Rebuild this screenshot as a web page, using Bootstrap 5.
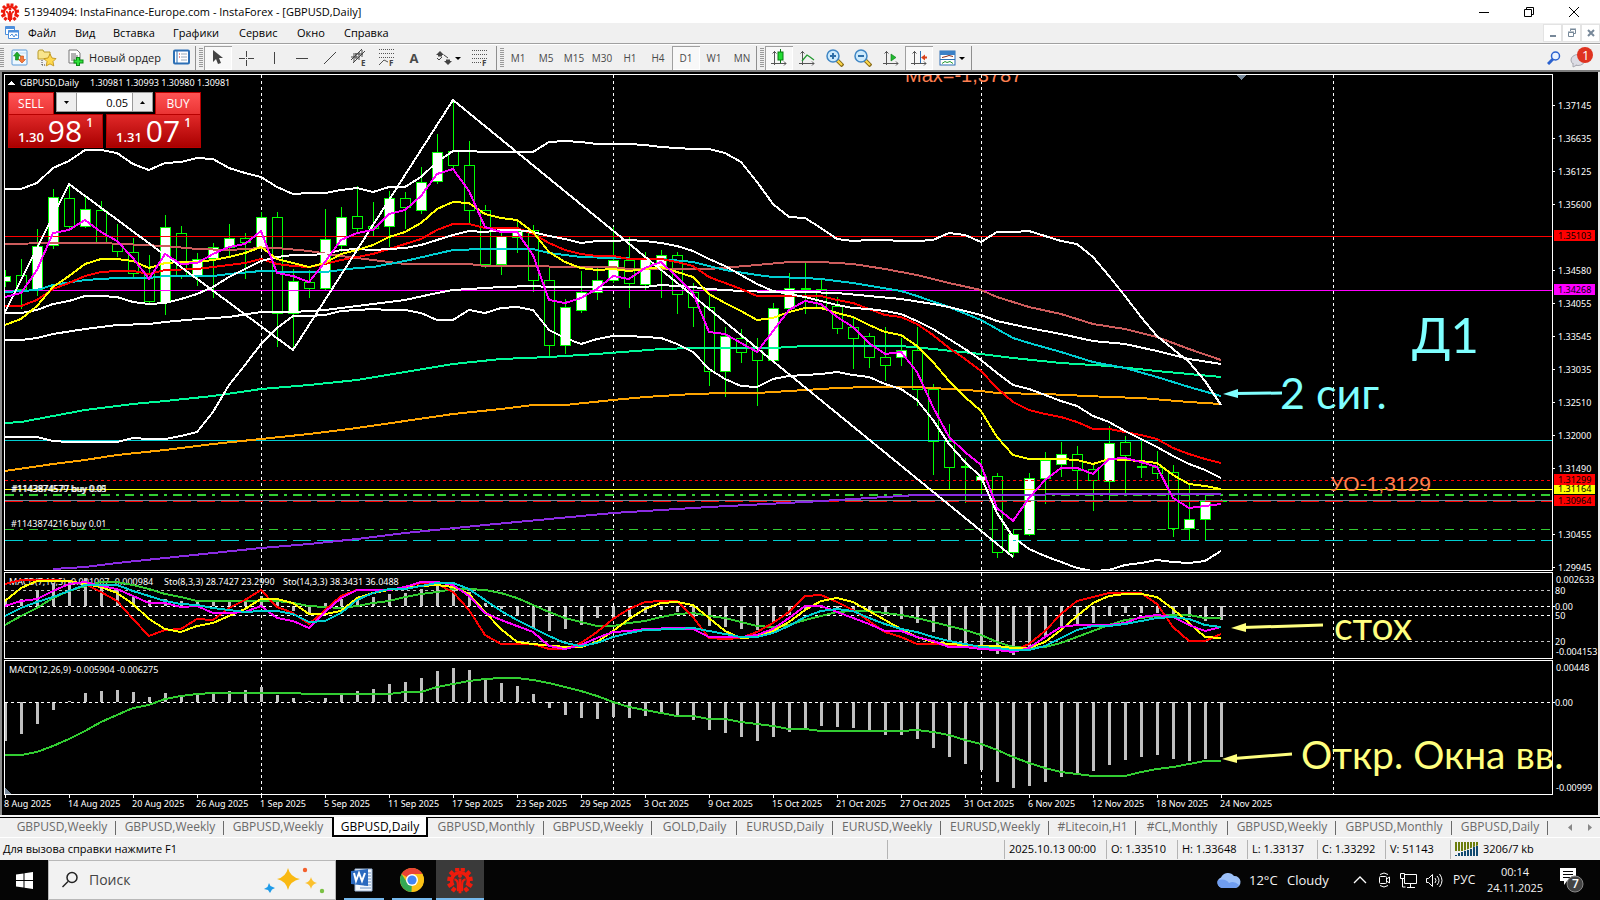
<!DOCTYPE html>
<html lang="ru">
<head>
<meta charset="utf-8">
<meta name="viewport" content="width=device-width, initial-scale=1">
<title>51394094: InstaFinance-Europe.com - InstaForex - [GBPUSD,Daily]</title>
<link rel="stylesheet" href="https://cdn.jsdelivr.net/npm/bootstrap@5.3.0/dist/css/bootstrap.min.css">
<style>
body{font-family:"Open Sans","Noto Sans",sans-serif;font-size:12px;line-height:16px;color:#000;background:#f0f0f0;overflow-x:hidden}
button,input{font-family:inherit;color:inherit}
.plain{border:0;background:none;padding:0;display:inline-flex;align-items:center;justify-content:center}
.titlebar{height:23px;background:#fff}
.titlebar .ctl{width:45px;height:23px}
.ttl{font-size:11px}
.menubar{height:22px;border-bottom:1px solid #fff;box-shadow:inset 0 -1px #a0a0a0;padding-bottom:2px}
.menubar a{color:#000;text-decoration:none;font-size:11px}
.m1{width:47px}.m2{width:38px}.m3{width:60px}.m4{width:66px}.m5{width:58px}.m6{width:47px}
.mdi{width:19px;height:18px;background:#fff!important;border:1px solid #e3e3e3!important}
.toolbar{height:27px;border-bottom:2px solid #7d7d7d}
.tgroup{border-right:1px solid #8f8f8f;padding-left:3px}
.grip{width:4px;height:19px;margin-right:1px;background:repeating-linear-gradient(#9a9a9a 0 1px,#f0f0f0 1px 2px)}
.tb{width:28px;height:24px;color:#4a4a4a;font-size:10px}
.tb.pressed{background:#f8f8f8;box-shadow:inset 1px 1px #a0a0a0,inset -1px -1px #fff}
.tb.wide{width:40px}.tb.slim{width:24px}.tb.tail{width:38px}
.lett{font-size:13px}
.neworder{width:106px;font-size:11px;color:#222}
.chartbox{background:#000}
#chart{display:block;width:100%;height:auto}
#chart text{font-family:"Noto Sans","Open Sans",sans-serif;font-size:9px;fill:#fff}
#chart .obj{font-family:"Liberation Sans",Arial,sans-serif;font-size:20px;fill:#ff7f50;font-kerning:none}
#chart .obj.wider{font-size:21px}
#chart .note{font-family:Lato,"Open Sans",sans-serif}
.deal{left:8px;top:20px;width:193px;color:#fff}
.dealbtn{width:46px;height:22px;background:linear-gradient(#ff5353,#ea3434);font-size:12px;color:#fff;border:1px solid #b80000;border-bottom:0}
.quote{width:95px;height:34px;background:linear-gradient(#e02828,#a90000);border:1px solid #b80000;color:#fff;line-height:1;padding-bottom:1px}
.quote .bigfig{font-size:30px}.quote .smallfig{font-size:13px;line-height:18px;font-weight:600}.quote .sup{font-size:12px;font-weight:600;padding-top:2px}
.lots{height:20px;background:#fff;width:97px;border:1px solid #999}
.lots button{width:19px;height:18px;background:#eee}
.lots input{width:57px;height:18px;border:0;border-left:1px solid #999;border-right:1px solid #999;text-align:right;font-size:11px;padding:0 4px;color:#000}
.tabstrip{height:22px;border-top:2px solid #f4f4f4;box-shadow:inset 0 1px #000}
.tabstrip .tab{height:20px;font-size:12px;color:#6a6a6a;text-decoration:none;display:flex;align-items:center;justify-content:center;position:relative;white-space:nowrap}
.tabstrip .tab::after{content:"";width:1px;height:14px;background:#6a6a6a;position:absolute;right:0;top:4px}
.tabstrip .on{background:#fff;color:#000;border:2px solid #000;border-top:0;padding-top:2px}
.tabstrip .on::after,.tabstrip .nosep::after{display:none}
.wk{width:108px}.mo{width:116px}.da{width:96px}.gd{width:85px}.lt{width:87px}.cl{width:92px}
.statusbar{height:23px;border-top:1px solid #fff;font-size:11px}
.statusbar .cell{border-left:1px solid #b4b4b4;height:19px;padding-left:4px;display:flex;align-items:center;white-space:nowrap}
.help{padding-left:3px}
.s1{width:117px}.s2{width:102px}.s3{width:71px}.s4{width:70px}.s5{width:68px}.s6{width:65px}.s7{width:150px}
.taskbar{height:40px;background:#050505;color:#f4f4f4}
.taskbar .start{width:48px;height:40px}
.searchbox{width:288px;height:40px;background:#f2f2f2;border:1px solid #b8b8b8}
.searchbox input{border:0;background:none;font-size:14px;width:120px;color:#333;outline:0}
.searchbox input::placeholder{color:#444;opacity:1}
.app{width:48px;height:40px;position:relative}
.app::after{content:"";position:absolute;left:4px;right:4px;bottom:0;height:2px;background:#76b9ed}
.app.act{background:#3a3a3a}.app.act::after{left:0;right:0}
.weather{font-size:13px}.clock{font-size:11px;width:68px}
.deg{width:38px}.cloudy{width:66px}.chev{margin-right:10px}.cam{margin-right:8px}.mon{margin-right:8px}.snd{margin-right:10px}.lang{font-size:12px;width:28px}
.bell{width:51px;height:40px}
</style>
</head>
<body>
<header>
<div class="titlebar d-flex align-items-center">
  <svg width="20" height="20" viewBox="0 0 40 40"><use href="#gear"/></svg>
  <span class="ms-1 flex-grow-1 text-truncate ttl">51394094: InstaFinance-Europe.com - InstaForex - [GBPUSD,Daily]</span>
  <button class="plain ctl" aria-label="Свернуть"><svg width="12" height="12" stroke="#000" fill="none"><path d="M1 6.500h10"/></svg></button>
  <button class="plain ctl" aria-label="Восстановить"><svg width="12" height="12" stroke="#000" fill="none"><path d="M1.500 3.500h7v7h-7zM3.500 3v-1.500h7v7h-1.500"/></svg></button>
  <button class="plain ctl me-1" aria-label="Закрыть"><svg width="12" height="12" stroke="#000" fill="none"><path d="M1 1l10 10M11 1L1 11"/></svg></button>
</div>
<nav class="menubar d-flex align-items-center">
  <svg class="ms-1 me-2" width="16" height="16" fill="#fff" stroke="#4d8fdc"><path d="M1.500 1.500h9v8h-9z"/><path d="M1 3h10" stroke-width="2"/><path d="M4.500 5.500h10v8h-10z"/><path d="M4 6.500h11" stroke-width="2"/><path fill="none" d="M6 11l2-2 2 3 2-3 1 2"/></svg>
  <div class="d-flex"><a href="#" class="m1">Файл</a><a href="#" class="m2">Вид</a><a href="#" class="m3">Вставка</a><a href="#" class="m4">Графики</a><a href="#" class="m5">Сервис</a><a href="#" class="m6">Окно</a><a href="#">Справка</a></div>
  <div class="ms-auto d-flex">
    <button class="plain mdi" aria-label="Свернуть график"><svg width="10" height="10"><path d="M2 8h6" stroke="#778899" stroke-width="2"/></svg></button>
    <button class="plain mdi" aria-label="Восстановить график"><svg width="10" height="10" fill="none" stroke="#778899"><path d="M1.500 4.500h5v4h-5zM1 4h6M3.500 3V1.500h5v4H7M3 1h6" /></svg></button>
    <button class="plain mdi" aria-label="Закрыть график"><svg width="10" height="10"><path d="M2 2l6 6M8 2L2 8" stroke="#778899" stroke-width="2"/></svg></button>
  </div>
</nav>
<div class="toolbar d-flex align-items-center">
  <div class="tgroup d-flex align-items-center ps-0">
    <span class="grip"></span>
    <button class="plain tb" aria-label="Новый график"><svg width="17" height="17"><rect x="1" y="1" width="15" height="15" rx="1" fill="#eef8ff" stroke="#5b9bd8"/><path d="M2 4h13" stroke="#bcdcf5"/><path d="M6 3l3.500 4h-2v4h-3V7h-2z" fill="#1fae2a" stroke="#0b7d14" stroke-width=".6"/><path d="M11 14l3.500-3.500h-2V7h-3v3.500h-2z" fill="#f47a3a" stroke="#c9430d" stroke-width=".6"/></svg></button>
    <button class="plain tb" aria-label="Профили"><svg width="20" height="18"><path d="M1 3q0-2 2-2h3l1 2h6v7H1z" fill="#f8e58c" stroke="#b79a2b"/><path d="M5 11v6M5 16h3" stroke="#444" stroke-dasharray="1 1"/><path d="M13 5l2 4 4 .6-3 3 .8 4.300-3.800-2-3.800 2 .8-4.300-3-3 4-.6z" fill="#ffd94e" stroke="#b98a10" stroke-width=".8"/></svg></button>
    <button class="plain neworder"><svg width="18" height="18"><path d="M2 1h8l3 3v10H2z" fill="#fff" stroke="#777"/><path d="M4 5h5M4 7h7M4 9h6M4 11h4" stroke="#666"/><path d="M11 8v9M6.500 12.500h10" stroke="#0b8a14" stroke-width="4"/><path d="M11 9v7M7.500 12.500h8" stroke="#2fe03a" stroke-width="2"/></svg><span class="text-nowrap ms-1">Новый ордер</span></button>
    <button class="plain tb" aria-label="Терминал"><svg width="17" height="17"><rect x="1" y="1.500" width="15" height="13" rx="1" fill="#fff" stroke="#2c6fb5" stroke-width="2"/><path d="M4 2v12" stroke="#2c6fb5"/><path d="M6 5h1M6 8h1" stroke="#d22"/><path d="M8 5h6M8 8h6M8 11h6" stroke="#9ab"/></svg></button>
  </div>
  <div class="tgroup d-flex align-items-center">
    <span class="grip"></span>
    <button class="plain tb pressed" aria-label="Курсор"><svg width="12" height="16"><path d="M1 0v12l3-3 2 5 3-1-2-5h4z" fill="#444"/></svg></button>
    <button class="plain tb" aria-label="Перекрестие"><svg width="16" height="16" stroke="#444"><path d="M8.500 1v6M8.500 10v6M1 8.500h6M10 8.500h6M8 8.500h1"/></svg></button>
    <button class="plain tb" aria-label="Вертикальная линия"><svg width="16" height="16" stroke="#444"><path d="M8.500 2v12"/></svg></button>
    <button class="plain tb" aria-label="Горизонтальная линия"><svg width="16" height="16" stroke="#444"><path d="M2 8.500h12"/></svg></button>
    <button class="plain tb" aria-label="Трендовая линия"><svg width="16" height="16" stroke="#444"><path d="M2 14L14 2"/></svg></button>
    <button class="plain tb" aria-label="Равноудаленный канал"><svg width="17" height="19" stroke="#444" fill="none"><path d="M1 12L12 1M3 15L15 3M4 5v9M6 5v6M9 4v8M12 2v7M1 9l7 0M5 6h8" /><text x="11" y="18" font-size="8" font-weight="700" fill="#444" stroke="none">E</text></svg></button>
    <button class="plain tb" aria-label="Линии Фибоначчи"><svg width="17" height="19" stroke="#555" fill="none"><path d="M1 1.500h15M1 5.500h15M1 9.500h15" stroke-dasharray="1 1"/><path d="M1 17l5-5 4 2"/><text x="11" y="18" font-size="8" font-weight="700" fill="#444" stroke="none">F</text></svg></button>
    <button class="plain tb" aria-label="Текст"><span class="fw-bold lett">A</span></button>
    <button class="plain tb wide" aria-label="Стрелки"><svg width="26" height="16" fill="#444"><path d="M5 1l4 4-2 0v1.500H3V5H1zM13 15l-4-4h2V9.500h4V11h2z"/><path d="M2 8l2 2 3-3M9 5l4 3" stroke="#444" fill="none"/><path d="M20 7h6l-3 3z" fill="#000"/></svg></button>
    <button class="plain tb slim" aria-label="Фибо уровни"><svg width="18" height="20" stroke="#555" fill="none"><path d="M1 2.500h15M1 6.500h15M1 10.500h15M1 14.500h9" stroke-dasharray="1 1"/><text x="11" y="18" font-size="8" font-weight="700" fill="#444" stroke="none">F</text></svg></button>
    <span class="pe-1"></span>
  </div>
  <div class="tgroup d-flex align-items-center"><span class="grip me-0"></span>
    <button class="plain tb">M1</button><button class="plain tb">M5</button><button class="plain tb">M15</button><button class="plain tb">M30</button><button class="plain tb">H1</button><button class="plain tb">H4</button><button class="plain tb pressed">D1</button><button class="plain tb">W1</button><button class="plain tb">MN</button></div>
  <div class="tgroup d-flex align-items-center">
    <span class="grip"></span>
    <button class="plain tb pressed" aria-label="Свечи"><svg width="16" height="18"><use href="#axes"/><path d="M9.500 0v14" stroke="#087a10"/><rect x="7" y="3" width="5" height="8" fill="#22dd33" stroke="#087a10"/></svg></button>
    <button class="plain tb" aria-label="Линия"><svg width="16" height="18"><use href="#axes"/><path d="M3 12l5-6 3 2 4 3" fill="none" stroke="#239a30" stroke-width="1.300"/></svg></button>
    <button class="plain tb" aria-label="Увеличить"><svg width="18" height="18"><use href="#lens"/><path d="M7 4v6M4 7h6" stroke="#2f6fa8" stroke-width="2"/></svg></button>
    <button class="plain tb" aria-label="Уменьшить"><svg width="18" height="18"><use href="#lens"/><path d="M4 7h6" stroke="#2f6fa8" stroke-width="2"/></svg></button>
    <button class="plain tb" aria-label="Автопрокрутка"><svg width="16" height="18"><use href="#axes"/><path d="M8 5v7l5-3.500z" fill="#22bb33" stroke="#087a10" stroke-width=".6"/></svg></button>
    <button class="plain tb pressed" aria-label="Сдвиг графика"><svg width="16" height="18"><use href="#axes"/><path d="M9.500 2v12" stroke="#2c6fb5"/><path d="M10 8.500l4-3v2h2v2h-2v2z" fill="#d9421a"/></svg></button>
    <button class="plain tb tail" aria-label="Шаблоны"><svg width="26" height="18"><rect x="1" y="2" width="15" height="14" fill="#fff" stroke="#2c6fb5"/><path d="M1 4h15" stroke="#3a80c6" stroke-width="4"/><path d="M1 10.500h15" stroke="#2c6fb5"/><path d="M3 8.500l4-1 3-1 4 1" fill="none" stroke="#8a2b1a"/><path d="M3 14.500l3-2 2 1 3-1 3 2" fill="none" stroke="#239a30"/><path d="M20 8h6l-3 3z"/></svg></button>
  </div>
  <div class="ms-auto d-flex align-items-center pe-1">
    <button class="plain tb" aria-label="Поиск"><svg width="14" height="14"><circle cx="8.500" cy="5" r="4" fill="#eaf3ff" stroke="#2b62cf" stroke-width="1.500"/><path d="M6 8l-5 5" stroke="#2b62cf" stroke-width="3"/></svg></button>
    <button class="plain tb" aria-label="Сообщения"><svg width="26" height="23"><ellipse cx="9" cy="14" rx="7" ry="5.500" fill="#dcdce4" stroke="#a8a8b0"/><path d="M4 17v4l4-2" fill="#dcdce4" stroke="#a8a8b0"/><circle cx="16" cy="9" r="8" fill="#df3320"/><text x="13" y="14" font-size="13" fill="#fff">1</text></svg></button>
  </div>
</div>
</header>

<main class="chartbox position-relative">
  <svg id="chart" viewBox="0 72 1600 743" role="img" aria-label="GBPUSD,Daily"></svg>
  <div class="deal position-absolute">
    <div class="d-flex justify-content-between">
      <button class="plain dealbtn">SELL</button>
      <div class="lots d-flex"><button class="plain" aria-label="Меньше"><svg width="5" height="3"><path d="M0 0h5L2.500 3z"/></svg></button><input aria-label="Объем" value="0.05"><button class="plain" aria-label="Больше"><svg width="5" height="3"><path d="M0 3h5L2.500 0z"/></svg></button></div>
      <button class="plain dealbtn">BUY</button>
    </div>
    <div class="d-flex justify-content-between">
      <button class="plain quote d-flex align-items-end"><span class="smallfig">1.30</span><span class="bigfig mx-1">98</span><span class="sup align-self-start">1</span></button>
      <button class="plain quote d-flex align-items-end"><span class="smallfig">1.31</span><span class="bigfig mx-1">07</span><span class="sup align-self-start">1</span></button>
    </div>
  </div>
</main>

<footer>
<nav class="tabstrip d-flex">
  <span class="ps-2"></span><a href="#" class="tab wk">GBPUSD,Weekly</a><a href="#" class="tab wk">GBPUSD,Weekly</a><a href="#" class="tab wk nosep">GBPUSD,Weekly</a><a href="#" class="tab da on">GBPUSD,Daily</a><a href="#" class="tab mo">GBPUSD,Monthly</a><a href="#" class="tab wk">GBPUSD,Weekly</a><a href="#" class="tab gd">GOLD,Daily</a><a href="#" class="tab da">EURUSD,Daily</a><a href="#" class="tab wk">EURUSD,Weekly</a><a href="#" class="tab wk">EURUSD,Weekly</a><a href="#" class="tab lt">#Litecoin,H1</a><a href="#" class="tab cl">#CL,Monthly</a><a href="#" class="tab wk">GBPUSD,Weekly</a><a href="#" class="tab mo">GBPUSD,Monthly</a><a href="#" class="tab da">GBPUSD,Daily</a>
  <span class="ms-auto d-flex align-items-center pe-2 gap-3"><button class="plain" aria-label="Назад"><svg width="4" height="7"><path d="M4 0v7L0 3.500z" fill="#888"/></svg></button><button class="plain" aria-label="Вперед"><svg width="4" height="7"><path d="M0 0v7l4-3.500z" fill="#888"/></svg></button></span>
</nav>
<div class="statusbar d-flex align-items-center">
  <span class="flex-grow-1 text-truncate help">Для вызова справки нажмите F1</span>
  <span class="cell s1"></span><span class="cell s2">2025.10.13 00:00</span><span class="cell s3">O: 1.33510</span><span class="cell s4">H: 1.33648</span><span class="cell s4">L: 1.33137</span><span class="cell s5">C: 1.33292</span><span class="cell s6">V: 51143</span>
  <span class="cell s7"><svg class="me-1" width="24" height="14"><path d="M0 4.500h24" stroke="#6b7d0c" stroke-width="9" stroke-dasharray="2 1"/><path d="M0 14V12L24 3v11z" fill="#f0f0f0"/><path d="M1 14v-1M4 14v-3M7 14v-4M10 14V9M13 14V8M16 14V7M19 14V5M22 14V4" stroke="#114a70" stroke-width="2"/></svg>3206/7 kb</span>
</div>
<div class="taskbar d-flex align-items-center">
  <button class="plain start" aria-label="Пуск"><svg width="17" height="17" fill="#fff"><path d="M0 2.500L7.500 1.500V8H0zM8.500 1.300L17 0v8H8.500zM0 9h7.500v6.500L0 14.500zM8.500 9H17v8l-8.500-1.300z"/></svg></button>
  <div class="searchbox d-flex align-items-center ps-2">
    <svg class="ms-1 me-2" width="18" height="18" fill="none" stroke="#222" stroke-width="1.500"><circle cx="11" cy="6.500" r="5"/><path d="M7 10.500L1.500 16"/></svg>
    <input aria-label="Поиск" placeholder="Поиск">
    <svg class="ms-auto me-2" width="64" height="30"><path d="M25 3q2 9 12 11-10 2-12 11-2-9-11-11 9-2 11-11z" fill="#f9b912"/><path d="M48 12q1 5 6 6-5 1-6 6-1-5-6-6 5-1 6-6z" fill="#fbc02d"/><path d="M6 18l1.500 3L12 23l-3 1.500L7 28l-2-3-4-1 3.500-2z" fill="#1e9be9"/><circle cx="42" cy="5" r="2.200" fill="#f4602c"/><circle cx="59" cy="26" r="2.200" fill="#7ac143"/></svg>
  </div>
  <button class="plain app ms-1" aria-label="Word"><svg class="me-1" width="24" height="24"><path d="M5 1h17v22H5z" fill="#f6f9fd" stroke="#9db8da"/><path d="M14 14h7M14 17h7M10 20h11M18 5h3M18 8h3M18 11h3" stroke="#6c93c6"/><path d="M1 3l17-2v17L1 16z" fill="#2b6abf"/><path d="M4 5l2 8 3-8 3 8 3-8" fill="none" stroke="#fff" stroke-width="2"/></svg></button>
  <button class="plain app" aria-label="Chrome"><svg width="24" height="24"><circle cx="12" cy="12" r="12" fill="#fbc116"/><path d="M12 12L1.600 6A12 12 0 0 1 22.400 6z" fill="#ea4335"/><path d="M12 12l-.5 12A12 12 0 0 1 1.600 6l5.600 8.800z" fill="#34a853"/><path d="M12 6h10.400q2 4 1.200 8-1.600 9-12.100 10l5.500-9z" fill="#fbc116"/><circle cx="12" cy="12" r="6" fill="#fff"/><circle cx="12" cy="12" r="4.600" fill="#4285f4"/></svg></button>
  <button class="plain app act" aria-label="InstaForex"><svg width="28" height="28" viewBox="0 0 40 40"><defs>
    <g id="gear" stroke="#ee1b0c" fill="none"><path stroke-width="6" d="M16 8V3M24 8V3M10 12L6 8M30 12l4-4M8 19l-6-1M32 19l6-1M8 26l-5 3M32 26l5 3M13 31l-4 5M27 31l4 5"/><path stroke-width="5" d="M10 28A12 12 0 1 1 30 28"/><path stroke-width="4" d="M20 18v21"/><path stroke-width="3" d="M12 19q5 1 5 8v9M28 19q-5 1-5 8v9"/><circle cx="20" cy="14" r="2.500" fill="#ee1b0c"/></g>
    <g id="axes"><path d="M3.500 2v14M0 14.500h15M1.500 4.500l2-2 2 2M13 12.500l2 2-2 2" stroke="#555" fill="none"/></g>
    <g id="lens"><path d="M11 11l6 6" stroke="#8a6d1a" stroke-width="4"/><path d="M11 11l5 5" stroke="#ffd84a" stroke-width="2"/><circle cx="7" cy="7" r="6" fill="#cdeafc" stroke="#3f86c4" stroke-width="1.500"/></g>
  </defs><use href="#gear"/></svg></button>
  <div class="ms-auto d-flex align-items-center">
    <svg class="me-2" width="25" height="18"><path d="M6 17a5.500 5.500 0 0 1-1-10.500A7.500 7.500 0 0 1 18 5a6 6 0 0 1 1 12z" fill="#9cc0f8"/><path d="M6 17a5.500 5.500 0 0 1-4-8q8-2 11 3 5-3 10 2a6 6 0 0 1-4 3z" fill="#6f9df0"/></svg>
    <span class="weather deg">12°C</span><span class="weather cloudy">Cloudy</span>
    <svg class="chev" width="14" height="8" fill="none" stroke="#fff" stroke-width="1.300"><path d="M1 7l6-6 6 6"/></svg>
    <svg class="cam" width="15" height="18" fill="none" stroke="#fff"><rect x="2.500" y="5.500" width="7" height="7" rx="1"/><path d="M9.500 8l3-2v6l-3-2M3 3.500q4-3 8 0M3 14.500q4 3 8 0"/></svg>
    <svg class="mon" width="17" height="17" fill="none" stroke="#fff"><path d="M4.500 2.500h12v9H4.500zM10.500 12v3M7 15.500h8"/><path d="M.5 1.500h4v5h-4z" fill="#050505"/><path d="M2.500 6v9h3"/></svg>
    <svg class="snd" width="18" height="15" fill="none" stroke="#fff"><path d="M1.500 5.500h2l4-4v12l-4-4h-2zM10 5q2 2.500 0 5M12 3q4 4.500 0 9M14.500 1q5 6.500 0 13"/></svg>
    <span class="lang">РУС</span>
    <div class="clock text-center"><div>00:14</div><div>24.11.2025</div></div>
    <button class="plain bell" aria-label="Уведомления"><svg width="32" height="30"><path d="M1 3h16v13H8l-3 4v-4H1z" fill="#fff"/><path d="M4 6.500h10M4 9.500h10M4 12.500h7" stroke="#050505"/><circle cx="16" cy="19" r="8" fill="#444" stroke="#888"/><text x="13" y="23" font-size="12" font-weight="600" fill="#fff">7</text></svg></button>
  </div>
</div>
</footer>
<script>
(function(){
const X=k=>5+16*k;
const out=[];
const rect=(x,y,w,h,f,s)=>out.push(`<rect x="${x}" y="${y}" width="${w}" height="${h}" fill="${f}"${s?` stroke="${s}"`:''}/>`);
const line=(x1,y1,x2,y2,c,w,d)=>out.push(`<path d="M${x1} ${y1}L${x2} ${y2}" stroke="${c}" stroke-width="${w||1}"${d?` stroke-dasharray="${d}"`:''} fill="none"/>`);
const text=(x,y,t,c,extra)=>out.push(`<text x="${x}" y="${y}"${c?` style="fill:${c}"`:''} ${extra||''}>${t}</text>`);
// one token per bar; "_" leaves the bar to linear interpolation
const series=(s,c)=>{let p=[];s.trim().split(/\s+/).forEach((v,k)=>{if(v!=='_')p.push(X(k)+','+v)});
  out.push(`<polyline points="${p.join(' ')}" fill="none" stroke="${c}" stroke-width="2"/>`)};

out.push('<g shape-rendering="crispEdges">');
rect(0,72,1600,743,'#000');rect(0,72,2,743,'#8c8c8c');rect(1598,72,2,743,'#e6e6e6');

out.push('<clipPath id="pane"><rect x="5" y="75" width="1547" height="495"/></clipPath><clipPath id="left"><rect x="5" y="75" width="1547" height="720"/></clipPath>');
[261,613,981,1333].forEach(x=>{line(x+.5,75,x+.5,570,'#fff',1,'3 3');line(x+.5,573,x+.5,658,'#fff',1,'3 3');line(x+.5,661,x+.5,794,'#fff',1,'3 3')});

// candles: high, low, body top, body bottom, 1 = rising
const candles=[[270,287,276,281,1],[259,309,275,289,0],[229,296,246,289,1],[189,249,197,245,1],[183,230,198,226,0],[197,228,209,226,1],[201,243,210,242,0],[224,257,243,251,0],[238,277,252,273,0],[255,303,273,301,0],[215,315,227,302,1],[226,279,233,275,0],[253,286,259,275,1],[243,298,247,258,1],[224,256,238,247,1],[233,279,238,242,0],[212,247,217,247,1],[212,347,217,313,0],[269,350,281,313,1],[270,298,282,288,0],[209,290,239,288,1],[207,252,217,245,1],[186,233,216,228,0],[202,236,226,228,0],[191,247,198,226,1],[192,229,198,207,0],[167,214,182,210,1],[134,184,152,181,1],[100,168,151,165,0],[141,223,165,210,0],[205,268,210,264,0],[232,275,236,264,1],[220,253,231,237,1],[225,292,230,280,0],[267,356,280,345,0],[299,354,307,345,1],[271,313,292,310,1],[266,300,280,292,1],[227,283,260,280,1],[237,308,260,283,0],[252,290,258,284,1],[250,298,255,267,1],[252,314,255,294,0],[283,327,292,307,0],[295,386,307,371,0],[327,397,336,371,1],[329,363,338,352,0],[338,406,350,360,0],[303,362,308,360,1],[273,309,288,308,1],[262,314,288,289,0],[280,308,289,307,0],[297,334,306,328,0],[318,369,327,338,0],[333,368,336,357,0],[327,381,357,365,0],[338,366,350,357,1],[327,406,350,389,0],[384,475,389,441,0],[424,489,441,467,0],[458,503,466,467,0],[460,496,476,480,1],[473,558,476,552,0],[529,557,534,552,1],[473,536,478,534,1],[452,504,460,478,1],[442,477,454,464,1],[446,489,454,470,0],[463,511,469,480,0],[426,501,443,481,1],[436,493,442,455,0],[440,478,466,467,0],[451,479,467,473,0],[465,537,472,528,0],[483,540,519,528,1],[495,540,501,519,1],[499,501,501,501,0]];
out.push('<g clip-path="url(#pane)">');
candles.forEach((c,k)=>{const x=X(k)+.5;line(x,c[0],x,c[2],'#0f0');line(x,c[3],x,c[1],'#0f0');
  if(c[3]-c[2]<2)line(x-5,c[2]+.5,x+5,c[2]+.5,'#0f0',c[3]-c[2]+1);
  else rect(x-5,c[2]+.5,10,c[3]-c[2],c[4]?'#fff':'#000','#0f0')});

// order and level lines
line(5,236.5,1552,236.5,'#f00');line(5,290.5,1552,290.5,'#f0f');line(5,440.5,1552,440.5,'#00ced1');
line(5,480.5,1552,480.5,'#f00',1,'3 3');line(5,489.5,1552,489.5,'#ff0');line(5,495,1552,495,'#32cd32',2,'9 6 3 6');
line(5,501.5,1552,501.5,'#f00',1,'18 6');line(5,500.5,1552,500.5,'#778899');
line(5,529.5,1552,529.5,'#32cd32',1,'9 6 3 6');line(5,540.5,1552,540.5,'#00ced1',1,'18 6');

series('423 422 _ 416 _ 410 _ _ 404 _ 401 _ _ 396 _ _ 389 _ _ 385 _ _ 380 _ _ 372 _ _ 364 _ _ 359 _ _ 357 _ _ 354 _ _ _ 349 _ 348 _ _ _ _ 348 _ 346 _ _ _ _ _ 346 _ 349 _ _ 354 _ 358 _ _ 363 _ _ 366 _ _ 371 _ 374 _ 377','#00fa9a');
series('471 _ _ 464 _ 460 _ 455 _ _ 450 _ _ 444 _ _ 439 _ _ 434 _ _ 428 _ _ 421 _ _ 414 _ _ 409 _ 405 _ 405 _ _ 400 _ 397 _ _ 394 _ 393 _ 393 _ 391 390 _ 388 _ 387 _ _ 387 _ 389 _ 391 393 _ _ 394 _ _ _ 397 _ 398 _ _ 402 _ 404','#ffa500');
series('_ _ _ 569 _ 567 _ 563 _ _ 558 _ _ 553 _ _ 548 _ _ 544 _ _ 539 _ _ 533 _ _ _ _ 525 _ _ _ _ _ _ _ 513 _ _ _ _ _ 507 _ _ _ _ _ 502 _ _ _ 498 _ _ 495 _ _ _ _ _ _ 495 _ 494 _ _ _ _ _ _ _ _ _ 494','#8a2be2');
series('244 _ _ 243 _ _ 243 _ _ _ 246 _ 249 _ 250 _ 248 248 _ 251 _ 256 _ 260 _ 264 _ _ _ 264 266 _ _ 266 _ 267 _ _ 267 269 _ _ _ _ 269 _ _ 265 _ 262 _ 262 _ 264 _ 269 _ 275 _ 283 _ 290 297 _ 307 _ 314 _ 324 _ 329 _ 337 _ 349 _ 360','#cd5c5c');
series('292 291 290 285 _ 280 _ 278 _ 278 276 _ _ 276 274 _ 271 _ 272 _ 272 _ 268 267 264 261 _ _ 250 _ 249 _ _ 249 253 _ 257 _ 258 _ 259 259 _ 262 266 270 _ 275 277 _ 278 279 _ 283 _ _ 291 296 _ 307 _ 320 329 338 343 _ 352 _ 362 _ 368 _ 377 _ 387 _ 396','#00ced1');
series('340 340 338 334 _ 329 _ 325 _ 324 322 _ 319 _ 317 _ 312 _ 312 _ 310 _ 306 304 302 300 _ 293 290 _ _ 287 _ 286 287 _ _ _ _ _ 287 285 _ 287 289 _ 291 _ 292 _ 292 _ 293 _ 296 _ 299 _ 304 307 _ 315 321 _ 328 _ 334 _ 341 _ 344 _ 351 _ 359 _ 364','#fff');
series('189 189 183 168 161 150 150 153 164 170 163 162 158 159 168 173 177 187 194 193 193 190 188 192 187 187 177 162 151 151 152 152 152 152 142 141 142 144 144 144 145 147 148 149 149 153 162 182 204 217 218 228 239 241 240 240 241 241 240 233 235 242 232 232 231 236 241 244 257 276 296 317 336 349 362 381 405','#fff');
series('437 437 437 441 442 442 442 442 438 439 439 436 432 412 385 365 344 328 316 316 315 311 310 309 310 310 313 320 320 310 313 308 307 310 330 338 344 339 336 336 337 338 344 352 369 379 386 387 379 376 375 374 372 375 377 384 389 400 420 444 462 477 513 537 549 556 562 568 571 570 565 563 560 562 563 561 551','#fff');
series('306 306 300 289 283 276 272 271 271 274 270 _ 269 _ 265 263 259 264 266 267 264 260 257 254 249 244 239 230 224 224 228 _ 228 234 243 250 254 256 256 259 _ 259 262 266 277 283 289 296 _ _ 296 296 300 303 309 315 317 324 335 348 359 371 388 402 410 414 417 422 429 429 432 435 439 448 454 459 463','#f00');
series('313 313 310 304 301 296 296 297 302 304 303 299 294 287 277 269 261 257 255 255 254 250 249 250 249 248 245 240 235 231 232 230 230 232 236 239 243 241 241 240 241 243 246 251 259 266 275 284 291 294 297 301 305 308 309 311 314 321 329 339 349 360 373 385 389 395 401 406 416 422 431 439 447 456 464 470 478','#fff');
series('325 319 306 287 276 264 259 259 261 268 263 262 262 260 257 253 247 259 263 267 263 254 250 245 237 232 223 209 202 203 214 218 220 232 252 262 268 270 269 271 269 267 272 277 294 303 311 320 318 312 308 308 313 317 325 332 335 346 362 381 397 411 437 455 459 459 459 460 464 459 460 461 463 475 484 486 489','#ff0');
out.push('<polyline points="5,312 69,184 293,350 453,100 1013,557" fill="none" stroke="#fff" stroke-width="2"/>');
series('297 293 270 233 230 220 232 241 258 279 254 264 263 254 247 244 231 273 276 282 262 240 233 230 214 210 196 174 169 191 227 232 232 255 300 303 298 289 276 279 268 262 277 293 332 334 343 352 331 310 301 304 317 327 343 354 352 372 407 437 452 465 508 521 498 480 468 468 474 459 458 462 467 498 508 506 504','#f0f');
out.push('</g></g>');
text(11,492,'#1143874579 buy 0.05');text(12,492,'#1143874577 buy 0.01');text(11,527,'#1143874216 buy 0.01');
out.push('<g clip-path="url(#pane)">');text(905,82,'Max=-1,3787','','class="obj"');out.push('</g>');
text(1330,491,'УО-1,3129','','class="obj wider"');

// oscillator pane
text(9,585,'MACD(7,10,5) -0.001007 -0.000984');text(164,585,'Sto(8,3,3) 28.7427 23.2990');text(283,585,'Sto(14,3,3) 38.3431 36.0488');
out.push('<g shape-rendering="crispEdges" clip-path="url(#left)">');
const hist=(s,b)=>s.split(' ').forEach((v,k)=>{v=+v;rect(X(k)-1,Math.min(v,b),3,Math.abs(v-b),'#c0c0c0')});
hist('601 599 590 583 582 578 584 590 597 600 599 601 601 601 601 601 596 602 611 613 603 599 597 597 594 593 589 585 588 592 603 609 616 629 631 629 625 618 619 617 613 610 612 617 626 627 629 630 623 615 610 608 609 610 612 615 619 623 632 640 643 648 654 655 647 637 627 625 623 616 613 613 613 615 617 621 620',606);
line(5,590.5,1552,590.5,'#c0c0c0',1,'3 3');line(5,606.5,1552,606.5,'#fff',1,'3 3');line(5,615.5,1552,615.5,'#fff',1,'3 3');line(5,641.5,1552,641.5,'#c0c0c0',1,'3 3');
series('625 616 608 598 591 586 582 582 585 589 594 597 601 _ _ 601 601 601 603 606 607 608 606 603 601 597 594 592 589 589 590 593 598 605 612 618 622 626 626 623 621 617 614 613 616 618 622 626 627 625 620 616 612 611 611 613 615 618 622 626 630 635 642 647 648 647 643 637 631 625 620 618 616 615 615 618 618','#32cd32');
series('584 580 580 580 581 584 592 601 619 636 630 629 619 620 608 600 590 607 613 624 610 596 590 _ 590 587 583 584 592 610 635 644 _ 644 649 649 643 632 619 609 602 601 601 617 638 639 638 632 623 612 596 595 602 610 621 632 637 644 644 _ 646 648 650 651 644 631 614 601 597 593 593 593 604 627 641 641 634','#f00');
series('601 588 581 _ 581 584 587 593 604 619 629 632 626 623 616 609 599 599 603 614 614 611 598 593 590 588 586 585 587 594 612 629 642 644 _ 647 647 642 631 619 609 603 602 605 618 631 638 637 631 622 610 601 598 602 611 620 629 637 642 644 645 646 646 648 648 642 630 616 603 596 594 594 597 609 623 637 638','#ff0');
series('606 601 599 591 584 582 586 589 596 603 603 607 606 613 613 612 606 618 621 628 612 598 590 _ 590 587 582 582 585 596 613 620 626 632 646 649 645 638 632 631 629 _ 628 629 637 637 637 635 629 618 606 606 612 618 624 631 631 637 641 647 647 649 650 652 648 637 627 625 _ 625 623 617 615 617 625 631 627','#f0f');
series('616 608 602 597 591 585 585 585 591 596 601 604 605 608 610 612 611 611 614 622 621 613 600 593 589 589 586 583 583 589 600 611 620 628 636 643 646 643 637 633 630 _ 629 628 631 634 637 637 633 626 617 611 609 611 618 624 629 632 637 641 644 647 648 650 650 646 638 630 626 626 624 621 618 617 619 625 627','#00ced1');

hist('741 734 724 710 701 693 691 690 692 697 693 695 694 694 691 690 687 695 698 701 698 694 691 689 684 682 678 671 668 670 680 683 686 694 708 715 718 719 717 718 716 714 715 720 730 733 737 741 737 732 728 726 727 728 730 735 735 739 748 757 764 770 782 788 786 782 777 773 771 765 760 757 755 759 761 759 757',702);
line(5,702.5,1552,702.5,'#fff',1,'3 3');
series('755 755 752 746 739 731 722 715 708 705 699 696 694 693 _ _ _ _ 693 694 _ _ _ _ 694 692 692 687 684 681 679 678 678 680 683 687 691 696 702 707 710 713 716 716 719 719 722 724 726 729 729 731 _ _ _ _ 731 730 732 735 740 744 750 757 763 768 772 774 776 _ 776 772 769 767 764 761 761','#32cd32');
out.push('</g>');
text(9,673,'MACD(12,26,9) -0.005904 -0.006275');
// frames, ticks and axis texts
out.push('<g shape-rendering="crispEdges">');
[[74,570],[572,658],[660,794]].forEach(([a,b])=>rect(4.5,a+.5,1548,b-a,'none','#fff'));
out.push('<path d="M1237 75h9l-4.500 5z" fill="#778899"/><path d="M5 788v6h6z" fill="#778899"/><path d="M8 85h7l-3.500-4z" fill="#fff"/>');
const prices=[[105,'1.37145'],[138,'1.36635'],[171,'1.36125'],[204,'1.35600'],[270,'1.34580'],[303,'1.34055'],[336,'1.33545'],[369,'1.33035'],[402,'1.32510'],[435,'1.32000'],[468,'1.31490'],[534,'1.30455'],[567,'1.29945']];
prices.forEach(p=>line(1553,p[0]+.5,1555,p[0]+.5,'#fff'));
[606,702].forEach(y=>line(1553,y+.5,1555,y+.5,'#fff'));
const days=['8 Aug','14 Aug','20 Aug','26 Aug','1 Sep','5 Sep','11 Sep','17 Sep','23 Sep','29 Sep','3 Oct','9 Oct','15 Oct','21 Oct','27 Oct','31 Oct','6 Nov','12 Nov','18 Nov','24 Nov'];
days.forEach((d,i)=>line(5.5+64*i,795,5.5+64*i,798,'#fff'));
const tags=[[489,'1.31164','#ff0'],[236,'1.35103','#f00'],[290,'1.34268','#f0f'],[480,'1.31299','#f00'],[501,'1.30964','#f00']];
tags.forEach(t=>rect(1554,t[0]-6,41,11,t[2]));
out.push('</g>');
prices.forEach(p=>text(1558,p[0]+4,p[1]));
tags.forEach(t=>text(1558,t[0]+3,t[1],'#000'));
days.forEach((d,i)=>text(4+64*i,807,d+' 2025'));
text(1556,583,'0.002633');text(1555,594,'80');text(1555,610,'0.00');text(1555,619,'50');text(1555,645,'20');text(1556,655,'-0.004153');
text(1556,671,'0.00448');text(1555,706,'0.00');text(1556,791,'-0.00999');
text(20,86,'GBPUSD,Daily');text(90,86,'1.30981 1.30993 1.30980 1.30981');
// hand-made notes with arrows
const note=(x,y,t,c,s)=>out.push(`<text class="note" x="${x}" y="${y}" style="fill:${c};font-size:${s}px">${t}</text>`);
const arrow=(x,y,x2,y2,c)=>out.push(`<path d="M${x+12} ${y-.5}L${x2} ${y2}" stroke="${c}" stroke-width="3"/><path d="M${x} ${y}l15-5v9z" fill="${c}"/>`);
note(1412,353,'Д1','#7fffff',49);note(1280,409,'2 сиг.','#7fffff',43);
note(1334,640,'стох','#ffff7f',39);note(1301,769,'Откр. Окна вв.','#ffff7f',39);
arrow(1223,394,1282,393,'#7fffff');arrow(1231,628,1323,625,'#ffff7f');arrow(1222,759,1292,754,'#ffff7f');
document.getElementById('chart').innerHTML=out.join('');
})();
</script>
<script src="https://cdn.jsdelivr.net/npm/bootstrap@5.3.0/dist/js/bootstrap.bundle.min.js"></script>
</body>
</html>
